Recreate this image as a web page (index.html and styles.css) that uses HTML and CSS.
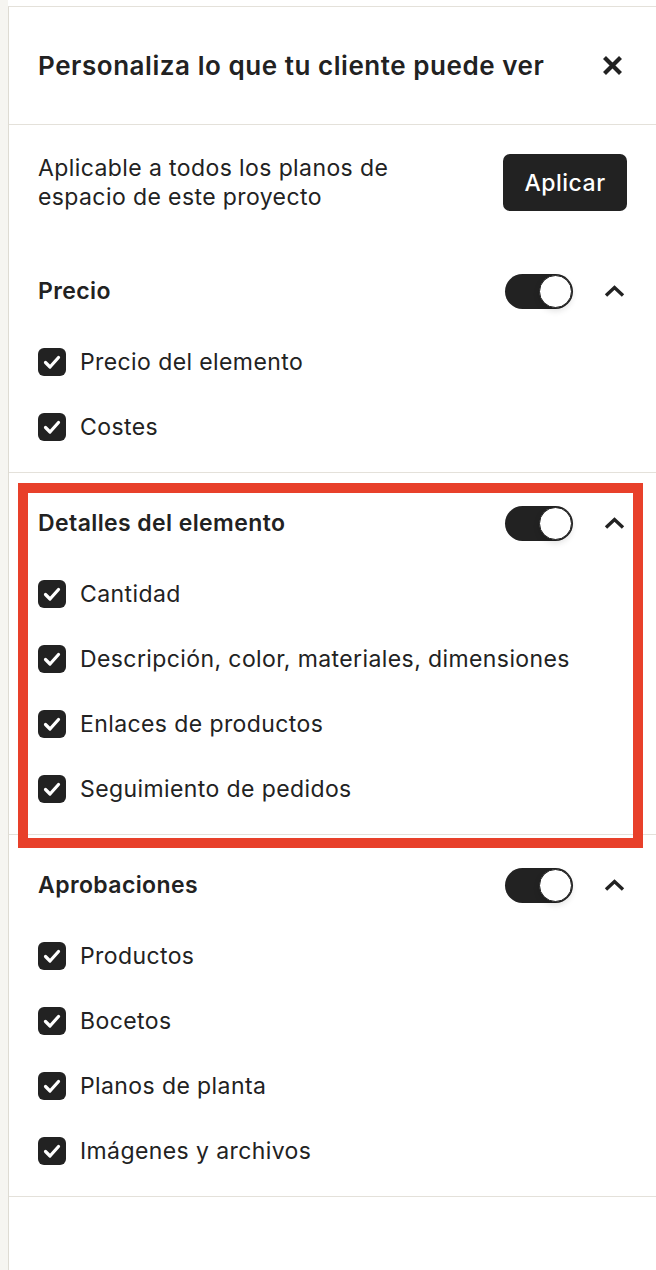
FILE: index.html
```html
<!DOCTYPE html>
<html lang="es">
<head>
<meta charset="utf-8">
<link rel="stylesheet" href="styles.css">
</head>
<body>
<div class="strip"></div>
<div class="panel">
  <header class="header">
    <h1 class="title">Personaliza lo que tu cliente puede ver</h1>
    <svg class="close" width="21" height="21" viewBox="0 0 21 21"><path d="M2.5 2.5 L18.5 18.5 M18.5 2.5 L2.5 18.5" stroke="#222" stroke-width="4.2" stroke-linecap="butt" fill="none"/></svg>
  </header>
  <div class="apply">
    <p class="apply-text">Aplicable a todos los planos de espacio de este proyecto</p>
    <button class="btn">Aplicar</button>
  </div>

  <section class="group">
    <div class="group-head">
      <h2 class="group-title">Precio</h2>
      <div class="controls">
        <span class="toggle"><span class="knob"></span></span>
        <svg class="chev" width="21" height="12" viewBox="0 0 21 12"><path d="M2 10.5 L10.5 2.5 L19 10.5" stroke="#222" stroke-width="3.4" fill="none"/></svg>
      </div>
    </div>
    <ul class="items">
      <li class="item"><span class="cb"><svg width="28" height="28" viewBox="0 0 28 28"><path d="M7.5 14.5 L12 19 L20.5 9.5" stroke="#fff" stroke-width="3.2" fill="none" stroke-linecap="round" stroke-linejoin="round"/></svg></span>Precio del elemento</li>
      <li class="item"><span class="cb"><svg width="28" height="28" viewBox="0 0 28 28"><path d="M7.5 14.5 L12 19 L20.5 9.5" stroke="#fff" stroke-width="3.2" fill="none" stroke-linecap="round" stroke-linejoin="round"/></svg></span>Costes</li>
    </ul>
  </section>

  <section class="group highlighted">
    <div class="group-head">
      <h2 class="group-title">Detalles del elemento</h2>
      <div class="controls">
        <span class="toggle"><span class="knob"></span></span>
        <svg class="chev" width="21" height="12" viewBox="0 0 21 12"><path d="M2 10.5 L10.5 2.5 L19 10.5" stroke="#222" stroke-width="3.4" fill="none"/></svg>
      </div>
    </div>
    <ul class="items">
      <li class="item"><span class="cb"><svg width="28" height="28" viewBox="0 0 28 28"><path d="M7.5 14.5 L12 19 L20.5 9.5" stroke="#fff" stroke-width="3.2" fill="none" stroke-linecap="round" stroke-linejoin="round"/></svg></span>Cantidad</li>
      <li class="item"><span class="cb"><svg width="28" height="28" viewBox="0 0 28 28"><path d="M7.5 14.5 L12 19 L20.5 9.5" stroke="#fff" stroke-width="3.2" fill="none" stroke-linecap="round" stroke-linejoin="round"/></svg></span>Descripción, color, materiales, dimensiones</li>
      <li class="item"><span class="cb"><svg width="28" height="28" viewBox="0 0 28 28"><path d="M7.5 14.5 L12 19 L20.5 9.5" stroke="#fff" stroke-width="3.2" fill="none" stroke-linecap="round" stroke-linejoin="round"/></svg></span>Enlaces de productos</li>
      <li class="item"><span class="cb"><svg width="28" height="28" viewBox="0 0 28 28"><path d="M7.5 14.5 L12 19 L20.5 9.5" stroke="#fff" stroke-width="3.2" fill="none" stroke-linecap="round" stroke-linejoin="round"/></svg></span>Seguimiento de pedidos</li>
    </ul>
    <div class="highlight-frame"></div>
  </section>

  <section class="group">
    <div class="group-head">
      <h2 class="group-title">Aprobaciones</h2>
      <div class="controls">
        <span class="toggle"><span class="knob"></span></span>
        <svg class="chev" width="21" height="12" viewBox="0 0 21 12"><path d="M2 10.5 L10.5 2.5 L19 10.5" stroke="#222" stroke-width="3.4" fill="none"/></svg>
      </div>
    </div>
    <ul class="items">
      <li class="item"><span class="cb"><svg width="28" height="28" viewBox="0 0 28 28"><path d="M7.5 14.5 L12 19 L20.5 9.5" stroke="#fff" stroke-width="3.2" fill="none" stroke-linecap="round" stroke-linejoin="round"/></svg></span>Productos</li>
      <li class="item"><span class="cb"><svg width="28" height="28" viewBox="0 0 28 28"><path d="M7.5 14.5 L12 19 L20.5 9.5" stroke="#fff" stroke-width="3.2" fill="none" stroke-linecap="round" stroke-linejoin="round"/></svg></span>Bocetos</li>
      <li class="item"><span class="cb"><svg width="28" height="28" viewBox="0 0 28 28"><path d="M7.5 14.5 L12 19 L20.5 9.5" stroke="#fff" stroke-width="3.2" fill="none" stroke-linecap="round" stroke-linejoin="round"/></svg></span>Planos de planta</li>
      <li class="item"><span class="cb"><svg width="28" height="28" viewBox="0 0 28 28"><path d="M7.5 14.5 L12 19 L20.5 9.5" stroke="#fff" stroke-width="3.2" fill="none" stroke-linecap="round" stroke-linejoin="round"/></svg></span>Imágenes y archivos</li>
    </ul>
  </section>
</div>
</body>
</html>
```
FILE: styles.css
```css
* { box-sizing: border-box; }
html, body { margin: 0; padding: 0; background: #fff; }
body {
  display: flex;
  min-height: 1270px;
  font-family: Inter, "Noto Sans", sans-serif;
  color: #222;
}
.strip {
  width: 8px;
  flex: none;
  background: #f6f5f1;
}
.panel {
  flex: 1;
  margin-top: 6px;
  border-top: 1px solid #e4e1da;
  border-left: 1px solid #dedbd3;
  background: #fff;
}
.header {
  height: 118px;
  display: flex;
  align-items: center;
  justify-content: space-between;
  padding: 0 33px 0 29px;
  border-bottom: 1px solid #e4e1da;
}
.title {
  margin: 0;
  font-size: 26px;
  font-weight: 600;
  letter-spacing: 0.55px;
}
.close { display: block; }
.apply {
  height: 115px;
  display: flex;
  align-items: center;
  justify-content: space-between;
  padding: 0 29px 0 29px;
}
.apply-text {
  margin: 0;
  width: 400px;
  font-size: 23px;
  line-height: 29px;
  letter-spacing: 0.4px;
}
.btn {
  width: 124px;
  height: 57px;
  border: none;
  border-radius: 7px;
  background: #222;
  color: #fff;
  font-family: inherit;
  font-size: 23px;
  font-weight: 500;
  letter-spacing: 0.5px;
  padding: 0;
}
.group {
  position: relative;
  padding: 33px 31px 13px 29px;
  border-bottom: 1px solid #e4e1da;
}
.group + .group { padding-top: 32px; }
.group-head {
  height: 36px;
  display: flex;
  align-items: center;
  justify-content: space-between;
}
.group-title {
  margin: 0;
  font-size: 23px;
  font-weight: 600;
  letter-spacing: 0.4px;
}
.controls {
  display: flex;
  align-items: center;
  gap: 31px;
}
.toggle {
  width: 68px;
  height: 35px;
  border-radius: 18px;
  background: #222;
  display: flex;
  align-items: center;
  justify-content: flex-end;
  padding: 1px;
}
.knob {
  width: 33px;
  height: 33px;
  border-radius: 50%;
  background: #fff;
  border: 1.5px solid #222;
  box-shadow: 0 3px 6px rgba(0,0,0,0.12);
}
.chev { display: block; }
.items {
  list-style: none;
  margin: 20px 0 0 0;
  padding: 0;
}
.item {
  height: 65px;
  display: flex;
  align-items: center;
  gap: 14px;
  font-size: 23px;
  letter-spacing: 0.4px;
}
.cb {
  width: 28px;
  height: 28px;
  flex: none;
  border-radius: 6px;
  background: #222;
  display: block;
}
.cb svg { display: block; }
.highlight-frame {
  position: absolute;
  top: 10px;
  left: 9px;
  right: 13px;
  bottom: -14px;
  border: 10px solid #e8402a;
  pointer-events: none;
}
```
